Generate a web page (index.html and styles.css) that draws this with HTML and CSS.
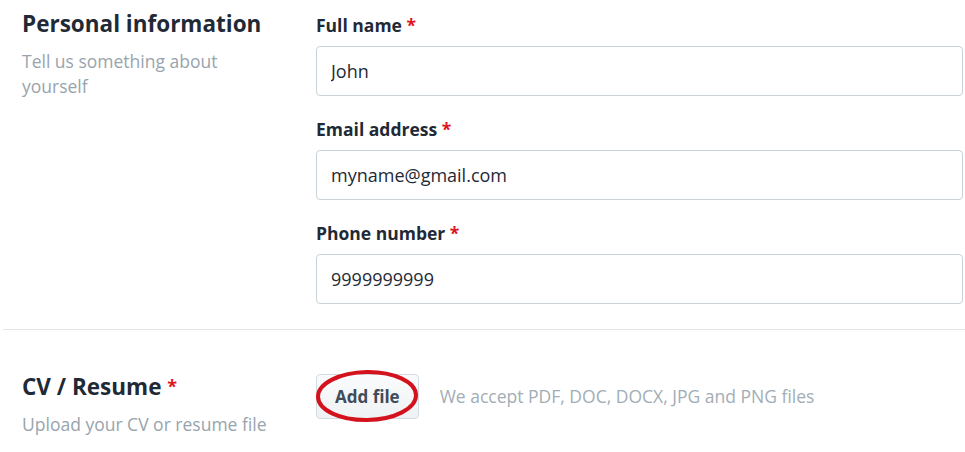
FILE: index.html
```html
<!DOCTYPE html>
<html lang="en">
<head>
<meta charset="utf-8">
<title>Application form</title>
<link rel="stylesheet" href="styles.css">
</head>
<body>
<form class="form">
  <section class="section section-personal">
    <div class="intro">
      <h2 class="intro-title">Personal information</h2>
      <p class="intro-text">Tell us something about yourself</p>
    </div>
    <div class="fields">
      <div class="field">
        <label class="label" for="name">Full name <span class="req">*</span></label>
        <input class="input" id="name" type="text" value="John">
      </div>
      <div class="field">
        <label class="label" for="email">Email address <span class="req">*</span></label>
        <input class="input" id="email" type="text" value="myname@gmail.com">
      </div>
      <div class="field">
        <label class="label" for="phone">Phone number <span class="req">*</span></label>
        <input class="input" id="phone" type="text" value="9999999999">
      </div>
    </div>
  </section>
  <hr class="divider">
  <section class="section section-cv">
    <div class="intro">
      <h2 class="intro-title">CV / Resume <span class="req req-small">*</span></h2>
      <p class="intro-text">Upload your CV or resume file</p>
    </div>
    <div class="upload">
      <div class="btn-wrap">
        <button type="button" class="btn">Add file</button>
        <svg class="mark" width="110" height="58" viewBox="0 0 110 58" aria-hidden="true">
          <ellipse cx="55" cy="29" rx="49" ry="24" fill="none" stroke="#d4121e" stroke-width="4" transform="rotate(-1 55 29)"/>
        </svg>
      </div>
      <span class="hint">We accept PDF, DOC, DOCX, JPG and PNG files</span>
    </div>
  </section>
</form>
</body>
</html>
```

FILE: styles.css
```css
* { box-sizing: border-box; }

html, body {
  margin: 0;
  padding: 0;
  background: #ffffff;
}

body {
  font-family: "Open Sans", "Noto Sans", "Liberation Sans", sans-serif;
  color: #1f2a36;
}

.form {
  width: 965px;
}

.section {
  display: flex;
}

.intro {
  width: 316px;
  flex: none;
  padding-left: 22px;
  padding-right: 40px;
}

.intro-title {
  margin: 0 0 9px;
  font-size: 22.5px;
  line-height: 32px;
  font-weight: 700;
  color: #1f2a36;
  white-space: nowrap;
}

.intro-text {
  margin: 0;
  font-size: 17.5px;
  line-height: 25px;
  color: #98a4ad;
}

.req {
  color: #e0141e;
}

.req-small {
  font-size: 18px;
  vertical-align: 2px;
}

.section-personal {
  padding-bottom: 25px;
}

.section-personal .intro {
  padding-top: 8px;
}

.fields {
  flex: 1;
  min-width: 0;
  padding-top: 13px;
  padding-right: 2px;
  display: flex;
  flex-direction: column;
  gap: 21px;
}

.field {
  display: flex;
  flex-direction: column;
}

.label {
  font-size: 17.5px;
  line-height: 24px;
  font-weight: 700;
  color: #1f2a36;
  margin-bottom: 9px;
}

.input {
  height: 50px;
  width: 100%;
  border: 1px solid #c9d1d7;
  border-radius: 4px;
  padding: 0 14px;
  font-family: inherit;
  font-size: 18px;
  font-weight: 500;
  color: #1f2a36;
  background: #fff;
  outline: none;
}

.divider {
  margin: 0 0 0 3px;
  border: 0;
  border-top: 1px solid #e2e6e9;
  height: 0;
}

.section-cv {
  padding-top: 40px;
}

.upload {
  flex: 1;
  padding-top: 4px;
  display: flex;
  align-items: flex-start;
  gap: 21px;
}

.btn-wrap {
  position: relative;
}

.btn {
  height: 45px;
  padding: 0 18px;
  border: 1px solid #d3dae0;
  border-radius: 4px;
  background: linear-gradient(#fafbfc, #eff2f4);
  font-family: inherit;
  font-size: 17px;
  font-weight: 700;
  color: #3e4c5b;
  cursor: pointer;
}

.mark {
  position: absolute;
  left: -4px;
  top: -7px;
  pointer-events: none;
}

.hint {
  font-size: 17.5px;
  line-height: 45px;
  color: #a2adb5;
}
```
